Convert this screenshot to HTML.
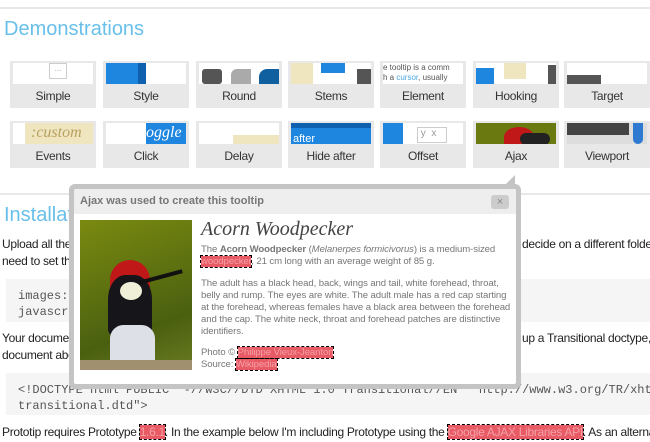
<!DOCTYPE html>
<html><head><meta charset="utf-8"><style>
*{margin:0;padding:0;box-sizing:border-box}
body{width:650px;height:442px;overflow:hidden;background:#fff;font-family:"Liberation Sans",sans-serif;font-size:12px;letter-spacing:-0.3px;color:#222;position:relative}
.abs{position:absolute}
.hr{position:absolute;left:0;right:0;height:2px;background:#e8e8e8}
h2{position:absolute;font-family:"Liberation Sans",sans-serif;font-weight:normal;font-size:20px;letter-spacing:0;color:#68c0ea;left:4px}
.tile{position:absolute;width:86px;height:47px;background:#e8e8e8}
.th{position:absolute;left:3px;top:2px;width:80px;height:21px;background:#fff;overflow:hidden;letter-spacing:0}
.lb{position:absolute;left:0;right:0;top:28px;text-align:center;font-size:12px;color:#333}
.code{position:absolute;left:6px;right:0;background:#f5f5f5;font-family:"Liberation Mono",monospace;font-size:12px;letter-spacing:0;color:#555;padding:9px 0 0 12px;line-height:16px;white-space:nowrap;overflow:hidden}
p.t{position:absolute;left:2px;line-height:17px;white-space:nowrap}
.hl{background:#e85a64;color:#f4a0a8;outline:1px dashed #000}
.tt{position:absolute;left:127px;width:310px;font-size:9.6px;line-height:12px;color:#777;letter-spacing:-0.1px}
</style></head><body>
<div class="hr" style="top:7px"></div>
<h2 style="top:18px">Demonstrations</h2>

<div class="tile" style="left:10px;top:61px"><div class="th"><div class="abs" style="left:36px;top:0;width:18px;height:16px;border:1px solid #ccc;font-size:8px;color:#999;text-align:center">...</div></div><div class="lb">Simple</div></div>
<div class="tile" style="left:103px;top:61px"><div class="th"><div class="abs" style="left:0;top:0;width:40px;height:21px;background:#1f86e0"></div><div class="abs" style="left:32px;top:0;width:8px;height:21px;background:#1060b0"></div></div><div class="lb">Style</div></div>
<div class="tile" style="left:196px;top:61px"><div class="th"><div class="abs" style="left:3px;top:6px;width:20px;height:15px;background:#555;border-radius:3px"></div><div class="abs" style="left:32px;top:6px;width:20px;height:15px;background:#aaa;border-radius:6px 0 0 0"></div><div class="abs" style="left:60px;top:6px;width:20px;height:15px;background:#1060a0;border-radius:8px 0 0 0"></div></div><div class="lb">Round</div></div>
<div class="tile" style="left:288px;top:61px"><div class="th"><div class="abs" style="left:0;top:0;width:22px;height:21px;background:#efe6c0"></div><div class="abs" style="left:30px;top:0;width:24px;height:10px;background:#1f86e0"></div><div class="abs" style="left:66px;top:6px;width:14px;height:15px;background:#555"></div></div><div class="lb">Stems</div></div>
<div class="tile" style="left:380px;top:61px"><div class="th" style="font-size:8px;color:#555;line-height:10px;white-space:nowrap">e tooltip is a comm<br>h a <span style="color:#4aa8e0">cursor</span>, usually</div><div class="lb">Element</div></div>
<div class="tile" style="left:473px;top:61px"><div class="th"><div class="abs" style="left:0;top:5px;width:18px;height:16px;background:#1f86e0"></div><div class="abs" style="left:28px;top:0;width:22px;height:16px;background:#efe6c0"></div><div class="abs" style="left:72px;top:2px;width:8px;height:19px;background:#555"></div></div><div class="lb">Hooking</div></div>
<div class="tile" style="left:564px;top:61px"><div class="th"><div class="abs" style="left:0;top:12px;width:34px;height:9px;background:#555"></div></div><div class="lb">Target</div></div>

<div class="tile" style="left:10px;top:121px"><div class="th"><div class="abs" style="left:12px;top:0;width:70px;height:21px;background:#efe6c0;font-family:'Liberation Serif',serif;font-style:italic;font-size:16px;color:#b9a060;line-height:20px;white-space:nowrap;padding-left:6px">:custom</div></div><div class="lb">Events</div></div>
<div class="tile" style="left:103px;top:121px"><div class="th"><div class="abs" style="left:40px;top:0;width:40px;height:21px;background:#1f86e0;color:#fff;font-family:'Liberation Serif',serif;font-style:italic;font-size:16px;line-height:20px">oggle</div></div><div class="lb">Click</div></div>
<div class="tile" style="left:196px;top:121px"><div class="th"><div class="abs" style="left:34px;top:12px;width:46px;height:9px;background:#efe6c0"></div></div><div class="lb">Delay</div></div>
<div class="tile" style="left:288px;top:121px"><div class="th" style="background:#1f86e0"><div class="abs" style="left:0;top:0;width:80px;height:5px;background:#1060b0"></div><div class="abs" style="left:2px;top:10px;color:#fff;font-size:11px">after</div></div><div class="lb">Hide after</div></div>
<div class="tile" style="left:380px;top:121px"><div class="th"><div class="abs" style="left:0;top:0;width:20px;height:21px;background:#1f86e0"></div><div class="abs" style="left:34px;top:4px;width:30px;height:16px;border:1px solid #ccc;font-size:10px;color:#999">&nbsp;y &nbsp;x</div></div><div class="lb">Offset</div></div>
<div class="tile" style="left:473px;top:121px"><div class="th" style="background:#6a7a10"><div class="abs" style="left:28px;top:4px;width:30px;height:20px;background:#c01818;border-radius:50% 50% 0 0"></div><div class="abs" style="left:44px;top:10px;width:30px;height:12px;background:#222;border-radius:6px"></div></div><div class="lb">Ajax</div></div>
<div class="tile" style="left:564px;top:121px"><div class="th" style="background:#ddd"><div class="abs" style="left:0;top:0;width:62px;height:12px;background:#444"></div><div class="abs" style="left:66px;top:0;width:10px;height:21px;background:#2d7ad0;border-radius:0 0 5px 5px"></div></div><div class="lb">Viewport</div></div>

<div class="hr" style="top:193px"></div>
<h2 style="top:204px">Installation</h2>
<p class="t" style="top:236px">Upload all the files</p>
<p class="t" style="top:236px;left:522px">decide on a different folder</p>
<p class="t" style="top:253px">need to set the</p>
<div class="code" style="top:279px;height:43px">images:<br>javascripts:</div>
<p class="t" style="top:330px">Your document</p>
<p class="t" style="top:330px;left:522px">up a Transitional doctype, or</p>
<p class="t" style="top:347px">document above</p>
<div class="code" style="top:373px;height:42px">&lt;!DOCTYPE html PUBLIC "-//W3C//DTD XHTML 1.0 Transitional//EN" "http://www.w3.org/TR/xhtml1/DTD/xhtml1-<br>transitional.dtd"&gt;</div>
<p class="t" style="top:424px">Prototip requires Prototype <span class="hl">1.6.1</span>. In the example below I'm including Prototype using the <span class="hl">Google AJAX Libraries API</span>. As an alternative</p>

<!-- tooltip -->
<div class="abs" style="left:505px;top:175px;width:0;height:0;border-left:10px solid transparent;border-bottom:10px solid #c4c4c4"></div>
<div class="abs" style="left:69px;top:184px;width:452px;height:205px;background:#c4c4c4;border-radius:6px"></div>
<div class="abs" style="left:74px;top:189px;width:442px;height:195px;background:#fff;border-radius:2px;overflow:hidden;font-family:'Liberation Sans',sans-serif;letter-spacing:0">
  <div class="abs" style="left:0;top:0;width:442px;height:25px;background:#eeeeee;font-weight:bold;font-size:11px;color:#777;padding:6px 0 0 6px">Ajax was used to create this tooltip</div>
  <div class="abs" style="left:417px;top:6px;width:18px;height:14px;background:#ccc;border-radius:3px;color:#888;font-size:11px;text-align:center;line-height:14px">×</div>
  <div class="abs" style="left:6px;top:31px;width:112px;height:150px;background:linear-gradient(160deg,#7a8a10,#4a6010 70%,#6a7a20)">
    <div class="abs" style="left:30px;top:40px;width:40px;height:40px;background:#c01818;border-radius:50% 50% 0 0"></div>
    <div class="abs" style="left:28px;top:55px;width:44px;height:60px;background:#15151a;border-radius:40% 40% 10% 10%"></div>
    <div class="abs" style="left:58px;top:55px;width:45px;height:4px;background:#111;transform:rotate(-15deg)"></div>
    <div class="abs" style="left:40px;top:62px;width:22px;height:18px;background:#f0f0d8;border-radius:50%"></div>
    <div class="abs" style="left:30px;top:105px;width:45px;height:45px;background:#dde0e6;border-radius:30% 30% 0 0"></div>
    <div class="abs" style="left:0;top:140px;width:112px;height:10px;background:#a09070"></div>
  </div>
  <div class="abs" style="left:127px;top:29px;font-family:'Liberation Serif',serif;font-style:italic;font-size:20px;color:#444">Acorn Woodpecker</div>
  <div class="tt" style="top:55px">The <b>Acorn Woodpecker</b> (<i>Melanerpes formicivorus</i>) is a medium-sized <span class="hl">woodpecker</span>, 21 cm long with an average weight of 85 g.</div>
  <div class="tt" style="top:89px">The adult has a black head, back, wings and tail, white forehead, throat, belly and rump. The eyes are white. The adult male has a red cap starting at the forehead, whereas females have a black area between the forehead and the cap. The white neck, throat and forehead patches are distinctive identifiers.</div>
  <div class="tt" style="top:158px">Photo © <span class="hl">Philippe Vieux-Jeanton</span><br>Source: <span class="hl">Wikipedia</span></div>
</div>
</body></html>
